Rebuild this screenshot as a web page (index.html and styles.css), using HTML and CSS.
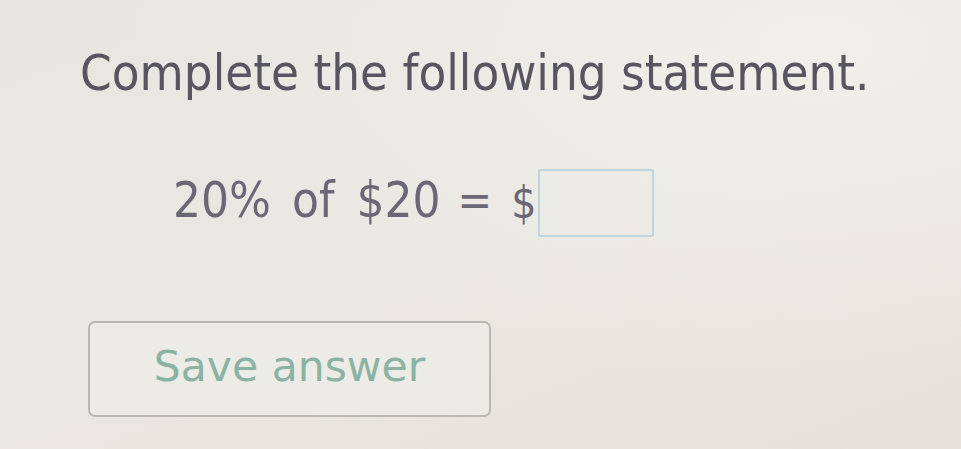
FILE: index.html
```html
<!DOCTYPE html>
<html lang="en">
<head>
<meta charset="utf-8">
<title>Complete the statement</title>
<link rel="stylesheet" href="styles.css">
</head>
<body>
<main class="question">
  <h1 class="prompt">Complete the following statement.</h1>
  <div class="equation">
    <span class="term">20%</span>
    <span class="word">of</span>
    <span class="term">$20</span>
    <span class="eq">=</span>
    <span class="cur">$</span>
    <input class="answer" type="text" aria-label="Answer">
  </div>
  <button class="save" type="button">Save answer</button>
</main>
</body>
</html>
```

FILE: styles.css
```css
html, body {
  margin: 0;
  height: 100%;
}

body {
  background:
    radial-gradient(ellipse at 85% 10%, #f0efea 0%, rgba(240, 239, 234, 0) 60%),
    linear-gradient(160deg, #e7e6e0 0%, #e9e7e1 55%, #e5e0da 100%);
  font-family: "DejaVu Sans", Verdana, sans-serif;
  overflow: hidden;
}

.question {
  padding: 43px 0 0 80px;
}

.prompt {
  margin: 0;
  font-family: "DejaVu Sans Condensed", "DejaVu Sans", sans-serif;
  font-stretch: condensed;
  font-weight: normal;
  font-size: 50.5px;
  line-height: 60px;
  color: #57555f;
}

.equation {
  display: flex;
  align-items: center;
  height: 70px;
  margin: 65px 0 0 93px;
  font-family: "DejaVu Sans Condensed", "DejaVu Sans", sans-serif;
  font-stretch: condensed;
  font-size: 49px;
  color: #6a6876;
}

.equation span {
  line-height: 1;
  margin-bottom: 6px;
}

.equation .word { margin-left: 21px; }
.equation .term + .word + .term { margin-left: 22px; }
.equation .eq {
  margin-left: 17px;
  font-size: 46px;
}
.equation .cur {
  margin-left: 19px;
  margin-bottom: 0;
  font-size: 44px;
}

.answer {
  box-sizing: border-box;
  width: 116px;
  height: 68px;
  margin: 0 0 0 2px;
  border: 2px solid #bdd5dc;
  border-radius: 2px;
  background: transparent;
  outline: none;
}

.save {
  display: block;
  box-sizing: border-box;
  width: 403px;
  height: 96px;
  margin: 83px 0 0 8px;
  padding: 0 0 6px;
  border: 2px solid #b7b9b2;
  border-radius: 7px;
  background: rgba(238, 239, 234, 0.6);
  font-family: "DejaVu Sans", Verdana, sans-serif;
  font-size: 42.5px;
  color: #8bb3a3;
  text-align: center;
}
```
